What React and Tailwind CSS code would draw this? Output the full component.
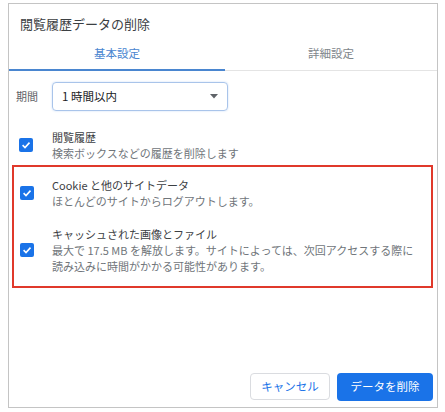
import React from "react";

function Check() {
  return (
    <div className="w-[14px] h-[14px] rounded-[2px] bg-[#1a73e8] flex items-center justify-center shrink-0">
      <svg width="10" height="10" viewBox="0 0 10 10">
        <path d="M1.6 5.2 L4 7.5 L8.5 2.6" fill="none" stroke="white" strokeWidth="1.6" />
      </svg>
    </div>
  );
}

export default function App() {
  return (
    <div className="w-[445px] h-[412px] bg-white pt-[3px] pl-[8px]" style={{ fontFamily: '"Noto Sans CJK JP", "Noto Sans", sans-serif' }}>
      <div className="w-[430px] h-[405px] border border-[#c4c4c4] flex flex-col">
        <div className="h-[34px] pl-[11px] pt-[11px] text-[13px] leading-[18px] text-[#3c4043]">閲覧履歴データの削除</div>
        <div className="flex h-[33px] border-b border-[#e4e4e4]">
          <div className="w-[216px] -mb-px border-b-2 border-[#4a86d0] flex items-center justify-center text-[11.5px] text-[#4a86d0]">基本設定</div>
          <div className="flex-1 flex items-center justify-center text-[11.5px] text-[#80868b]">詳細設定</div>
        </div>
        <div className="flex items-center mt-[11px] pl-[7px]">
          <div className="w-[36px] text-[11px] text-[#5f6368]">期間</div>
          <div className="w-[176px] h-[29px] border border-[#a9c4ea] rounded-[4px] shadow-[0_0_2px_rgba(26,115,232,0.25)] flex items-center justify-between pl-[9px] pr-[9px] text-[11.5px] text-[#202124]">
            <span>1 時間以内</span>
            <svg width="8" height="5" viewBox="0 0 8 5">
              <path d="M0 0 L8 0 L4 4.5 Z" fill="#5f6368" />
            </svg>
          </div>
        </div>
        <div className="flex items-center mt-[18px] pl-[10px]">
          <Check />
          <div className="ml-[19px] text-[11px] leading-[16px]">
            <div className="text-[#3c4043]">閲覧履歴</div>
            <div className="text-[#70757a]">検索ボックスなどの履歴を削除します</div>
          </div>
        </div>
        <div className="ml-[3px] mt-[4px] w-[421px] border-2 border-[#e0392b] pt-[10px] pb-[12px]">
          <div className="flex items-center pl-[6px]">
            <Check />
            <div className="ml-[18px] text-[11px] leading-[16px]">
              <div className="text-[#3c4043]">Cookie と他のサイトデータ</div>
              <div className="text-[#70757a]">ほとんどのサイトからログアウトします。</div>
            </div>
          </div>
          <div className="flex items-center pl-[6px] mt-[17px]">
            <Check />
            <div className="ml-[18px] text-[11px] leading-[16px] whitespace-nowrap">
              <div className="text-[#3c4043]">キャッシュされた画像とファイル</div>
              <div className="text-[#70757a]">最大で 17.5 MB を解放します。サイトによっては、次回アクセスする際に<br />読み込みに時間がかかる可能性があります。</div>
            </div>
          </div>
        </div>
        <div className="mt-auto mb-[6px] mr-[4px] flex justify-end gap-[7px]">
          <div className="w-[80px] h-[27px] border border-[#dadce0] rounded-[4px] flex items-center justify-center text-[11.5px] text-[#1a73e8]">キャンセル</div>
          <div className="w-[96px] h-[28px] bg-[#1a73e8] rounded-[4px] flex items-center justify-center text-[11.5px] text-white">データを削除</div>
        </div>
      </div>
    </div>
  );
}
